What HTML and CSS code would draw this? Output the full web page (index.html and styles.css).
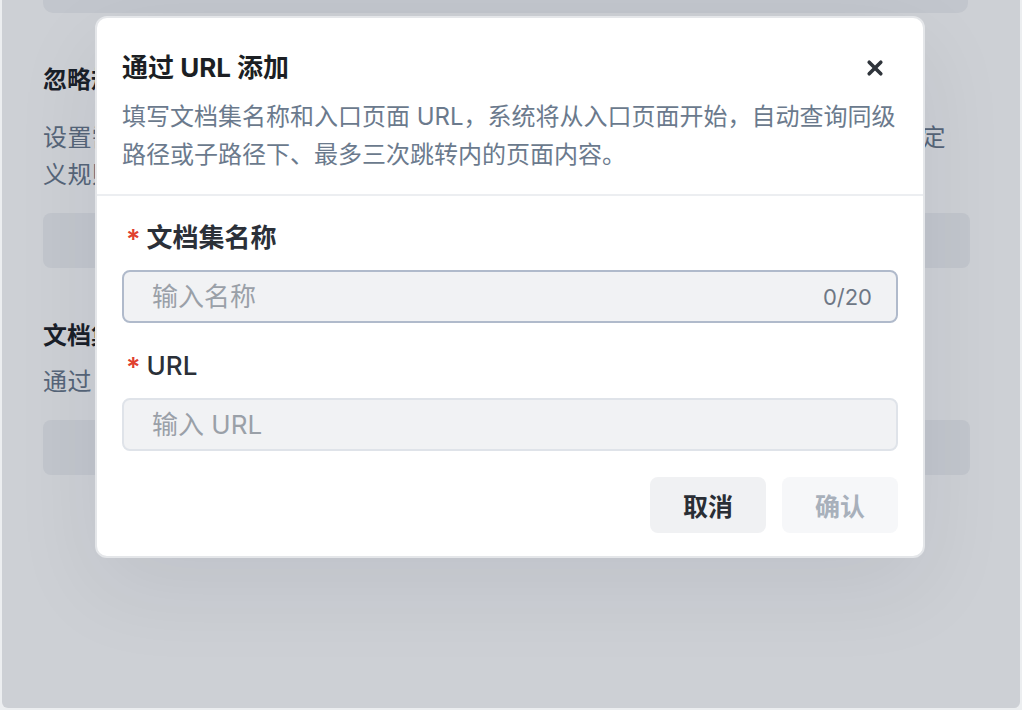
FILE: index.html
```html
<!DOCTYPE html>
<html lang="zh-CN">
<head>
<meta charset="utf-8">
<title>通过 URL 添加</title>
<link rel="stylesheet" href="styles.css">
</head>
<body>
<div class="frame">
  <div class="page">
    <div class="top-bar"></div>
    <section class="section section-ignore">
      <h3 class="sec-title">忽略规则</h3>
      <p class="sec-text">设置需要在抓取时忽略的页面路径，系统将跳过与这些规则相匹配的页面，可以自定义规则来批量排除页面。</p>
      <div class="sec-box"></div>
    </section>
    <section class="section section-docs">
      <h3 class="sec-title">文档集</h3>
      <p class="sec-text">通过 URL 添加在线文档集。</p>
      <div class="sec-box"></div>
    </section>
  </div>

  <div class="overlay">
    <div class="modal">
      <div class="modal-head">
        <div class="head-row">
          <h2 class="modal-title">通过 URL 添加</h2>
          <button class="close-btn" aria-label="关闭">
            <svg width="20" height="20" viewBox="0 0 20 20"><path d="M4.2 4.2 L15.8 15.8 M15.8 4.2 L4.2 15.8" stroke="#2f343b" stroke-width="3.6" stroke-linecap="round" fill="none"/></svg>
          </button>
        </div>
        <p class="modal-desc">填写文档集名称和入口页面 URL，系统将从入口页面开始，自动查询同级路径或子路径下、最多三次跳转内的页面内容。</p>
      </div>
      <div class="modal-body">
        <div class="field">
          <label class="field-label"><span class="req">*</span>文档集名称</label>
          <div class="input input-active">
            <span class="placeholder">输入名称</span>
            <span class="counter">0/20</span>
          </div>
        </div>
        <div class="field field-url">
          <label class="field-label"><span class="req">*</span>URL</label>
          <div class="input">
            <span class="placeholder">输入 URL</span>
          </div>
        </div>
        <div class="footer">
          <button class="btn btn-cancel">取消</button>
          <button class="btn btn-ok">确认</button>
        </div>
      </div>
    </div>
  </div>
</div>
</body>
</html>
```

FILE: styles.css
```css
* { box-sizing: border-box; }

html, body {
  margin: 0;
  padding: 0;
  width: 1022px;
  height: 710px;
  overflow: hidden;
  background: #eceef0;
  font-family: "Inter", "Noto Sans CJK SC", sans-serif;
}

.frame {
  position: relative;
  margin: 0 2px;
  height: 708px;
  border-radius: 0 0 6px 6px;
  overflow: hidden;
  background: #ffffff;
}

.page {
  padding: 0 50px 0 41px;
}

.top-bar {
  height: 13px;
  background: #f2f3f5;
  border-radius: 0 0 10px 10px;
  margin-right: 2px;
}

.section { display: flex; flex-direction: column; }

.sec-title {
  margin: 0;
  font-size: 24px;
  line-height: 34px;
  font-weight: 700;
  color: #1f2329;
}

.sec-text {
  margin: 0;
  font-size: 24px;
  line-height: 37px;
  color: #6b7a8d;
  letter-spacing: 0.4px;
}

.sec-box {
  height: 55px;
  border-radius: 8px;
  background: #f2f3f5;
  margin-top: 20px;
}

.section-ignore { margin-top: 50px; }
.section-ignore .sec-text { margin-top: 22px; }
.section-docs { margin-top: 51px; }
.section-docs .sec-text { margin-top: 10px; }

.overlay {
  position: absolute;
  inset: 0;
  background: rgba(5, 20, 45, 0.2);
  display: flex;
  justify-content: center;
  align-items: flex-start;
  padding-top: 16px;
}

.modal {
  width: 830px;
  margin-right: 2px;
  background: #ffffff;
  border: 2px solid #e4e6e9;
  border-radius: 12px;
  box-shadow: 0 30px 90px rgba(5, 20, 45, 0.07);
}

.modal-head {
  padding: 34px 25px 20px 25px;
  border-bottom: 2px solid #eceef1;
}

.head-row {
  display: flex;
  align-items: center;
  justify-content: space-between;
}

.modal-title {
  margin: 0;
  font-size: 26px;
  line-height: 32px;
  font-weight: 700;
  color: #1c1f24;
}

.close-btn {
  width: 24px;
  height: 24px;
  padding: 0;
  margin-right: 11px;
  border: none;
  background: transparent;
  display: flex;
  align-items: center;
  justify-content: center;
}

.modal-desc {
  margin: 14px 0 0 0;
  font-size: 24px;
  line-height: 38px;
  color: #6b7a8d;
}

.modal-body {
  padding: 24px 25px 23px 25px;
  display: flex;
  flex-direction: column;
}

.field { display: flex; flex-direction: column; gap: 14px; }
.field-url { margin-top: 25px; }

.field-label {
  display: flex;
  align-items: center;
  gap: 6px;
  padding-left: 4px;
  font-size: 26px;
  line-height: 36px;
  font-weight: 600;
  color: #2b3038;
}

.req {
  color: #e0402f;
  font-size: 27px;
  font-weight: 600;
  line-height: 36px;
  position: relative;
  top: 2px;
}

.field-url .field-label { font-weight: 500; }

.input {
  height: 53px;
  border: 2px solid #dfe3e9;
  border-radius: 8px;
  background: #f1f2f4;
  display: flex;
  align-items: center;
  justify-content: space-between;
  padding: 0 24px 0 28px;
}

.input-active { border-color: #b0bacb; }

.placeholder {
  font-size: 26px;
  color: #9aa0a8;
  line-height: 1;
}

.counter {
  font-size: 22px;
  color: #6e7785;
  line-height: 1;
}

.footer {
  margin-top: 26px;
  display: flex;
  justify-content: flex-end;
  gap: 16px;
}

.btn {
  width: 116px;
  height: 56px;
  border: none;
  border-radius: 8px;
  font-family: "Inter", "Noto Sans CJK SC", sans-serif;
  font-size: 25px;
  font-weight: 700;
}

.btn-cancel { background: #f0f1f3; color: #2a2e35; }
.btn-ok { background: #f6f7f9; color: #a8b0bb; }
```
